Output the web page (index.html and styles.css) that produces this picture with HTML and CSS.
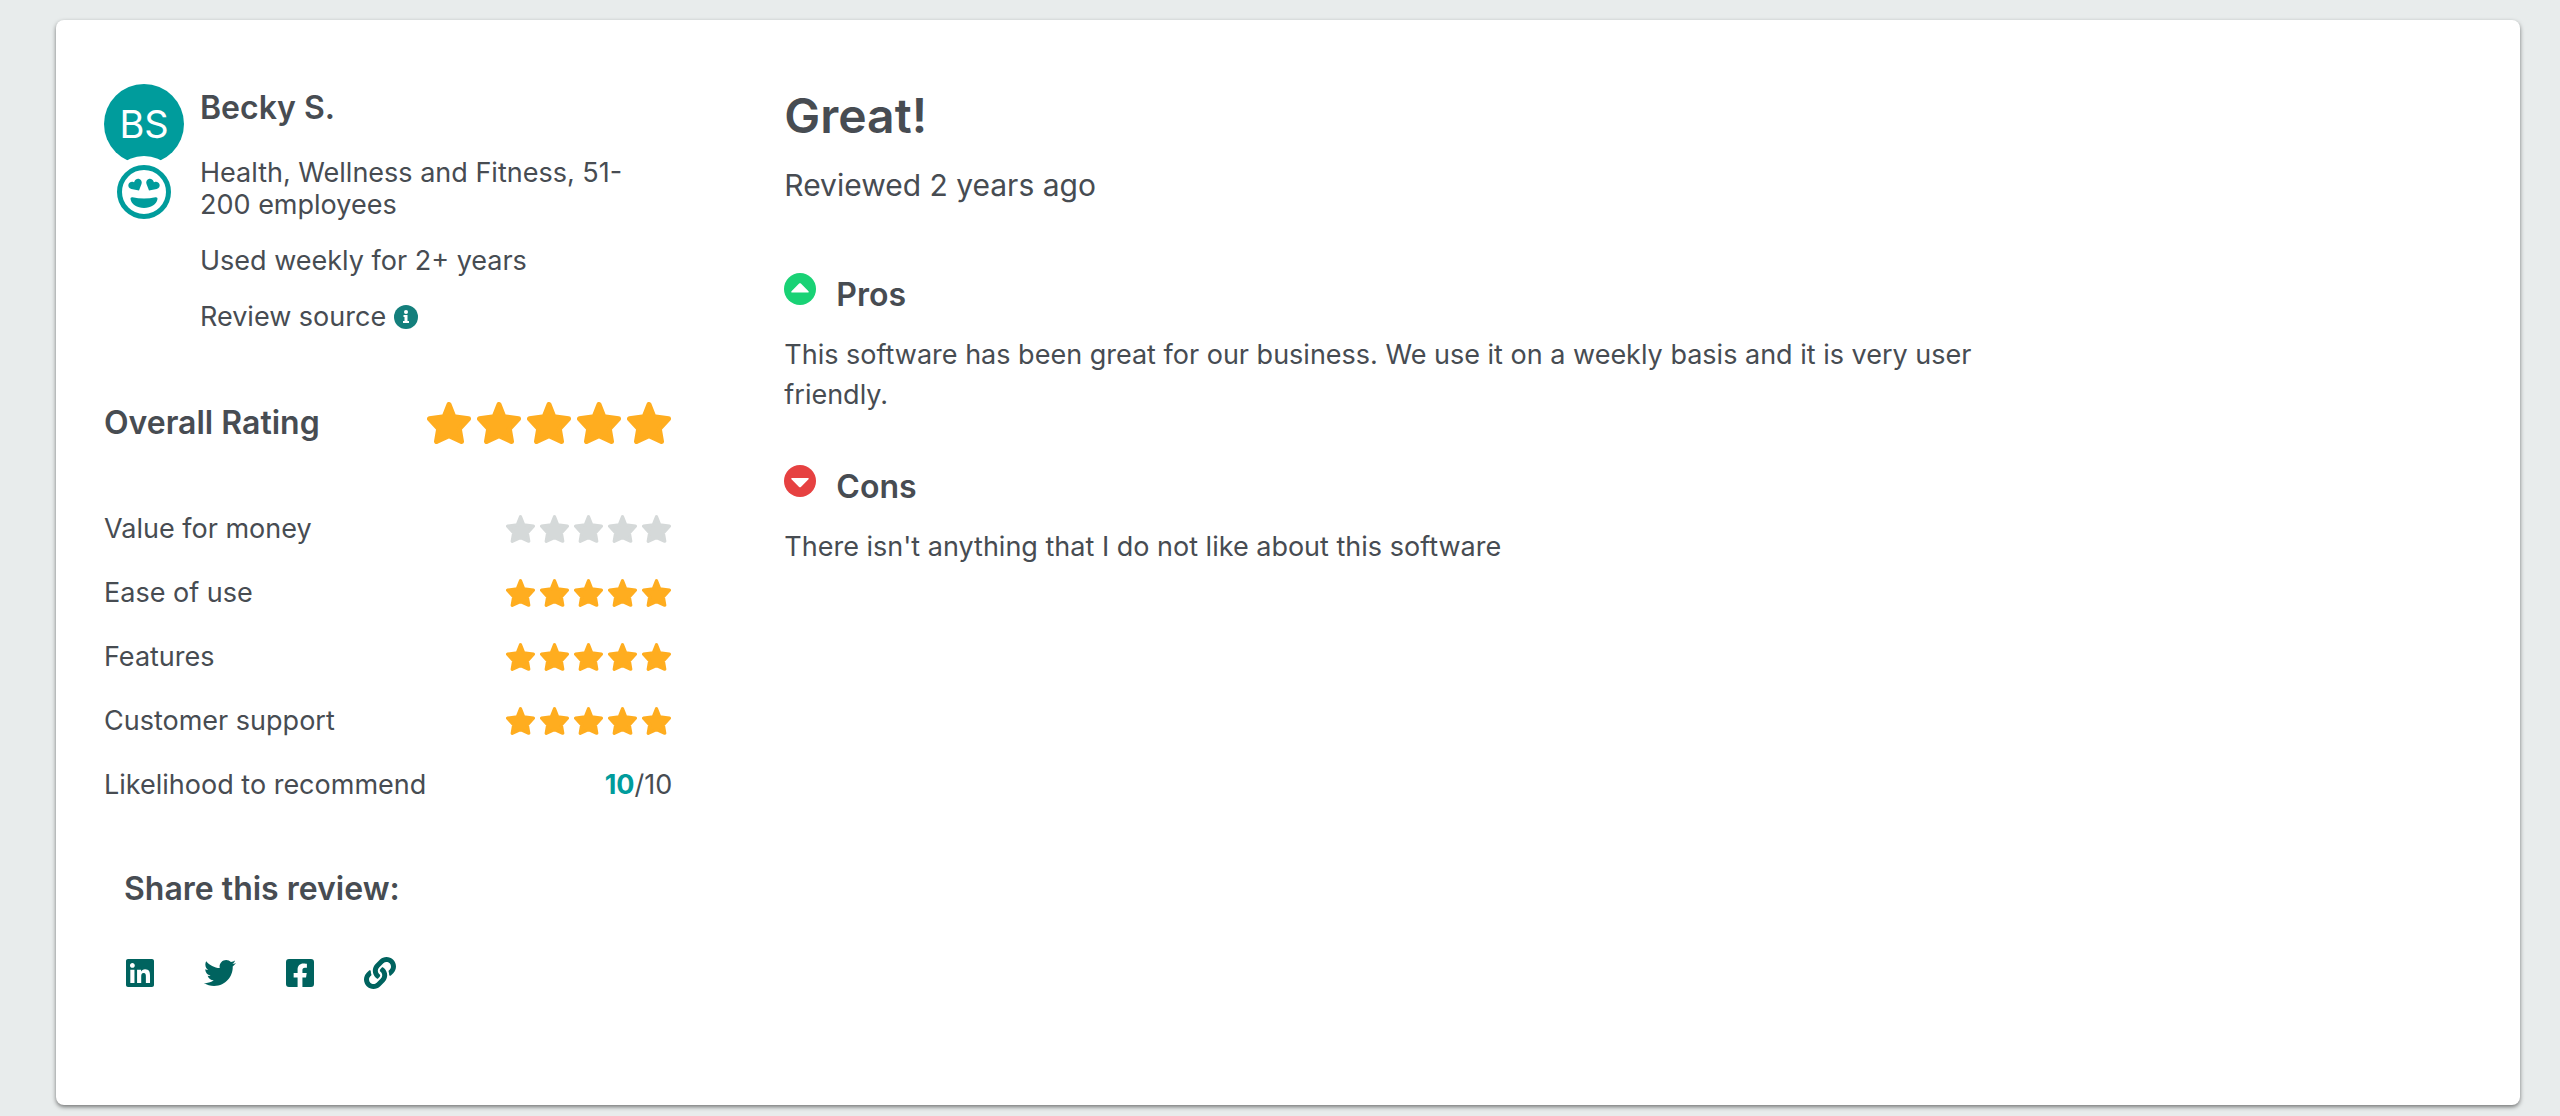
FILE: index.html
```
<!DOCTYPE html>
<html lang="en">
<head>
  <meta charset="UTF-8" />
  <meta name="viewport" content="width=device-width, initial-scale=1.0" />
  <title>Review by Becky S.</title>
  <link rel="stylesheet" href="styles.css">
</head>
<body>
  <!-- Shared icon shapes -->
  <svg class="sprite" aria-hidden="true">
    <symbol id="star" viewBox="0 0 44 42">
      <path fill="currentColor" stroke="currentColor" stroke-width="5" stroke-linejoin="round" d="M22 2.500L26.800 14.700L41.500 16.800L32.300 26.800L34.500 39.500L22 33.800L9.500 39.500L11.700 26.800L2.500 16.800L17.200 14.700Z"/>
    </symbol>
  </svg>

  <article class="card">
    <aside class="reviewer">
      <div class="profile">
        <div class="avatar-column">
          <div class="avatar">BS</div>
          <svg class="mood" viewBox="0 0 72 72" role="img" aria-label="Loved it">
            <circle cx="36" cy="36" r="36" fill="#fff"/>
            <circle cx="36" cy="36" r="24.500" fill="none" stroke="#009c9c" stroke-width="5"/>
            <g fill="#009c9c">
              <path d="M31 34.600l-7.700-1.600c-2.300-.6-3.500-2.700-2.800-4.800.6-1.900 2.700-2.900 4.700-2.300l.9.300.4-1c.8-1.900 2.900-2.900 4.800-2.200 2 .7 3 2.900 2.200 5z"/>
              <path d="M41 34.600l7.700-1.600c2.300-.6 3.500-2.700 2.800-4.800-.6-1.900-2.700-2.900-4.700-2.300l-.9.300-.4-1c-.8-1.900-2.900-2.900-4.800-2.200-2 .7-3 2.900-2.200 5z"/>
              <path d="M24.500 41.200c7.500 1.600 15.500 1.600 23 0 1.300-.3 2.200.6 2 1.900-.9 5.500-6.600 8.900-13.500 8.900s-12.600-3.400-13.500-8.900c-.2-1.300.7-2.200 2-1.900z"/>
            </g>
          </svg>
        </div>
        <div class="profile-text">
          <h3>Becky S.</h3>
          <p>Health, Wellness and Fitness, 51-200 employees</p>
          <p>Used weekly for 2+ years</p>
          <p class="source">Review source
            <svg class="info" viewBox="0 0 24 24" role="img" aria-label="More information">
              <circle cx="12" cy="12" r="12" fill="#147f7c"/>
              <path fill="#fff" d="M9.500 10h4v6H15v2H9v-2h1.500v-4h-1z"/>
              <circle cx="12" cy="7" r="2" fill="#fff"/>
            </svg>
          </p>
        </div>
      </div>

      <div class="rating overall">
        <h3>Overall Rating</h3>
        <div class="stars large" role="img" aria-label="5 out of 5">
          <svg><use href="#star"/></svg><svg><use href="#star"/></svg><svg><use href="#star"/></svg><svg><use href="#star"/></svg><svg><use href="#star"/></svg>
        </div>
      </div>

      <div class="rating">
        <span>Value for money</span>
        <div class="stars empty" role="img" aria-label="Not rated">
          <svg><use href="#star"/></svg><svg><use href="#star"/></svg><svg><use href="#star"/></svg><svg><use href="#star"/></svg><svg><use href="#star"/></svg>
        </div>
      </div>
      <div class="rating">
        <span>Ease of use</span>
        <div class="stars" role="img" aria-label="5 out of 5">
          <svg><use href="#star"/></svg><svg><use href="#star"/></svg><svg><use href="#star"/></svg><svg><use href="#star"/></svg><svg><use href="#star"/></svg>
        </div>
      </div>
      <div class="rating">
        <span>Features</span>
        <div class="stars" role="img" aria-label="5 out of 5">
          <svg><use href="#star"/></svg><svg><use href="#star"/></svg><svg><use href="#star"/></svg><svg><use href="#star"/></svg><svg><use href="#star"/></svg>
        </div>
      </div>
      <div class="rating">
        <span>Customer support</span>
        <div class="stars" role="img" aria-label="5 out of 5">
          <svg><use href="#star"/></svg><svg><use href="#star"/></svg><svg><use href="#star"/></svg><svg><use href="#star"/></svg><svg><use href="#star"/></svg>
        </div>
      </div>
      <div class="rating">
        <span>Likelihood to recommend</span>
        <span><strong class="score">10</strong>/10</span>
      </div>

      <div class="share">
        <h3>Share this review:</h3>
        <div class="share-links">
          <a href="#" aria-label="Share on LinkedIn">
            <svg viewBox="-32 0 512 512"><path d="M416 32H31.900C14.300 32 0 46.500 0 64.300v383.400C0 465.500 14.300 480 31.900 480H416c17.600 0 32-14.500 32-32.300V64.300c0-17.800-14.400-32.300-32-32.300zM135.400 416H69V202.200h66.500V416zm-33.200-243c-21.300 0-38.500-17.300-38.500-38.500S80.900 96 102.200 96c21.200 0 38.500 17.300 38.500 38.500 0 21.300-17.200 38.500-38.500 38.500zm282.100 243h-66.400V312c0-24.800-.5-56.700-34.500-56.700-34.600 0-39.900 27-39.900 54.900V416h-66.400V202.200h63.700v29.200h.9c8.900-16.800 30.600-34.500 62.900-34.500 67.200 0 79.700 44.300 79.700 101.900V416z"/></svg>
          </a>
          <a href="#" aria-label="Share on Twitter">
            <svg viewBox="0 0 512 512"><path d="M459.370 151.716c.325 4.548.325 9.097.325 13.645 0 138.720-105.583 298.558-298.558 298.558-59.452 0-114.680-17.219-161.137-47.106 8.447.974 16.568 1.299 25.340 1.299 49.055 0 94.213-16.568 130.274-44.832-46.132-.975-84.792-31.188-98.112-72.772 6.498.974 12.995 1.624 19.818 1.624 9.421 0 18.843-1.300 27.614-3.573-48.081-9.747-84.143-51.980-84.143-102.985v-1.299c13.969 7.797 30.214 12.670 47.431 13.319-28.264-18.843-46.781-51.005-46.781-87.391 0-19.492 5.197-37.360 14.294-52.954 51.655 63.675 129.300 105.258 216.365 109.807-1.624-7.797-2.599-15.918-2.599-24.040 0-57.828 46.782-104.934 104.934-104.934 30.213 0 57.502 12.670 76.670 33.137 23.715-4.548 46.456-13.320 66.599-25.340-7.798 24.366-24.366 44.833-46.132 57.827 21.117-2.273 41.584-8.122 60.426-16.243-14.292 20.791-32.161 39.308-52.628 54.253z"/></svg>
          </a>
          <a href="#" aria-label="Share on Facebook">
            <svg viewBox="-32 0 512 512"><path d="M400 32H48A48 48 0 0 0 0 80v352a48 48 0 0 0 48 48h137.250V327.690h-63V256h63v-54.640c0-62.150 37-96.480 93.670-96.480 27.140 0 55.520 4.840 55.520 4.840v61h-31.270c-30.810 0-40.420 19.120-40.420 38.730V256h68.780l-11 71.690h-57.780V480H400a48 48 0 0 0 48-48V80a48 48 0 0 0-48-48z"/></svg>
          </a>
          <a href="#" aria-label="Copy link">
            <svg viewBox="0 0 512 512"><path d="M326.612 185.391c59.747 59.809 58.927 155.698.36 214.590-.110.120-.240.250-.360.370l-67.200 67.200c-59.270 59.270-155.699 59.262-214.960 0-59.270-59.260-59.270-155.700 0-214.960l37.106-37.106c9.840-9.840 26.786-3.300 27.294 10.606.648 17.722 3.826 35.527 9.690 52.721 1.986 5.822.567 12.262-3.783 16.612l-13.087 13.087c-28.026 28.026-28.905 73.660-1.155 101.960 28.024 28.579 74.086 28.749 102.325.510l67.200-67.190c28.191-28.191 28.073-73.757 0-101.830-3.701-3.694-7.429-6.564-10.341-8.569a16.037 16.037 0 0 1-6.947-12.606c-.396-10.567 3.348-21.456 11.698-29.806l21.054-21.055c5.521-5.521 14.182-6.199 20.584-1.731a152.482 152.482 0 0 1 20.522 17.197zM467.547 44.449c-59.261-59.262-155.690-59.270-214.960 0l-67.200 67.200c-.120.120-.250.250-.360.370-58.566 58.892-59.387 154.781.360 214.590a152.454 152.454 0 0 0 20.521 17.196c6.402 4.468 15.064 3.789 20.584-1.731l21.054-21.055c8.350-8.350 12.094-19.239 11.698-29.806a16.037 16.037 0 0 0-6.947-12.606c-2.912-2.005-6.640-4.875-10.341-8.569-28.073-28.073-28.191-73.639 0-101.830l67.200-67.190c28.239-28.239 74.300-28.069 102.325.510 27.750 28.300 26.872 73.934-1.155 101.960l-13.087 13.087c-4.350 4.350-5.769 10.790-3.783 16.612 5.864 17.194 9.042 34.999 9.690 52.721.509 13.906 17.454 20.446 27.294 10.606l37.106-37.106c59.271-59.259 59.271-155.699.001-214.959z"/></svg>
          </a>
        </div>
      </div>
    </aside>

    <section class="review">
      <h2>Great!</h2>
      <p class="date">Reviewed 2 years ago</p>

      <div class="point">
        <svg class="arrow" viewBox="0 0 32 32" aria-hidden="true">
          <circle cx="16" cy="16" r="16" fill="#19d275"/>
          <path fill="#fff" d="M8 19.500h16c.8 0 1-.8.500-1.300l-7.600-7.600c-.6-.6-1.200-.6-1.800 0l-7.600 7.600c-.5.5-.3 1.300.5 1.300z"/>
        </svg>
        <h3>Pros</h3>
      </div>
      <p class="comment">This software has been great for our business. We use it on a weekly basis and it is very user friendly.</p>

      <div class="point">
        <svg class="arrow" viewBox="0 0 32 32" aria-hidden="true">
          <circle cx="16" cy="16" r="16" fill="#e64141"/>
          <path fill="#fff" d="M8 13h16c.8 0 1 .8.500 1.300l-7.600 7.600c-.6.6-1.200.6-1.800 0l-7.600-7.600c-.5-.5-.3-1.300.5-1.300z"/>
        </svg>
        <h3>Cons</h3>
      </div>
      <p class="comment">There isn't anything that I do not like about this software</p>
    </section>
  </article>
</body>
</html>
```
FILE: styles.css
```
* {
  box-sizing: border-box;
}
body {
  margin: 0;
  padding: 20px 40px 12px 56px;
  background: #e8ecec;
  color: #474c52;
  font-family: Inter, "Liberation Sans", sans-serif;
  font-size: 27px;
  line-height: 32px;
}
h2, h3, p {
  margin: 0;
}
h2, h3 {
  font-weight: 600;
}
h2 {
  font-size: 48px;
  line-height: 64px;
}
h3 {
  font-size: 32px;
  line-height: 44px;
}
svg {
  display: block;
}
.sprite {
  position: absolute;
  width: 0;
  height: 0;
}
.card {
  display: grid;
  grid-template-columns: 24% 52%;
  column-gap: 112px;
  padding: 64px 48px 116px;
  background: #fff;
  border-radius: 8px;
  box-shadow: 0 2px 4px rgba(0, 0, 0, 0.5);
}

/* Reviewer */
.profile {
  display: flex;
  gap: 16px;
}
.avatar-column {
  display: flex;
  flex-direction: column;
  align-items: center;
}
.avatar {
  width: 80px;
  height: 80px;
  border-radius: 50%;
  background: #009c9c;
  color: #fff;
  font-size: 38px;
  line-height: 80px;
  text-align: center;
}
.mood {
  width: 72px;
  height: 72px;
  margin-top: -8px;
}
.profile-text {
  display: flex;
  flex-direction: column;
  gap: 24px;
  padding: 2px 32px 0 0;
}
.profile-text h3 {
  margin-bottom: 3px;
}
.source {
  display: flex;
  align-items: center;
  gap: 8px;
}
.info {
  width: 24px;
  height: 24px;
}

/* Ratings */
.rating {
  display: flex;
  justify-content: space-between;
  align-items: center;
  margin-bottom: 32px;
}
.overall {
  margin: 68px 0;
}
.stars {
  display: flex;
  gap: 5px;
  margin-right: 1px;
  color: #ffad1f;
}
.stars svg {
  width: 29px;
  height: 28px;
}
.stars.large {
  gap: 6px;
}
.stars.large svg {
  width: 44px;
  height: 42px;
}
.stars.empty {
  color: #d5d9d9;
}
.score {
  color: #009c9c;
}

/* Share */
.share {
  margin-top: 66px;
  padding-left: 20px;
}
.share-links {
  display: flex;
  gap: 48px;
  margin-top: 46px;
}
.share-links a {
  color: #00635f;
}
.share-links svg {
  width: 32px;
  height: 32px;
  fill: currentColor;
}

/* Review */
.date {
  margin-top: 17px;
  font-size: 30px;
  line-height: 40px;
}
.point {
  display: flex;
  align-items: flex-start;
  gap: 20px;
  margin: 50px 0 18px;
}
.date + .point {
  margin-top: 68px;
}
.arrow {
  width: 32px;
  height: 32px;
}
.comment {
  line-height: 40px;
}
```
